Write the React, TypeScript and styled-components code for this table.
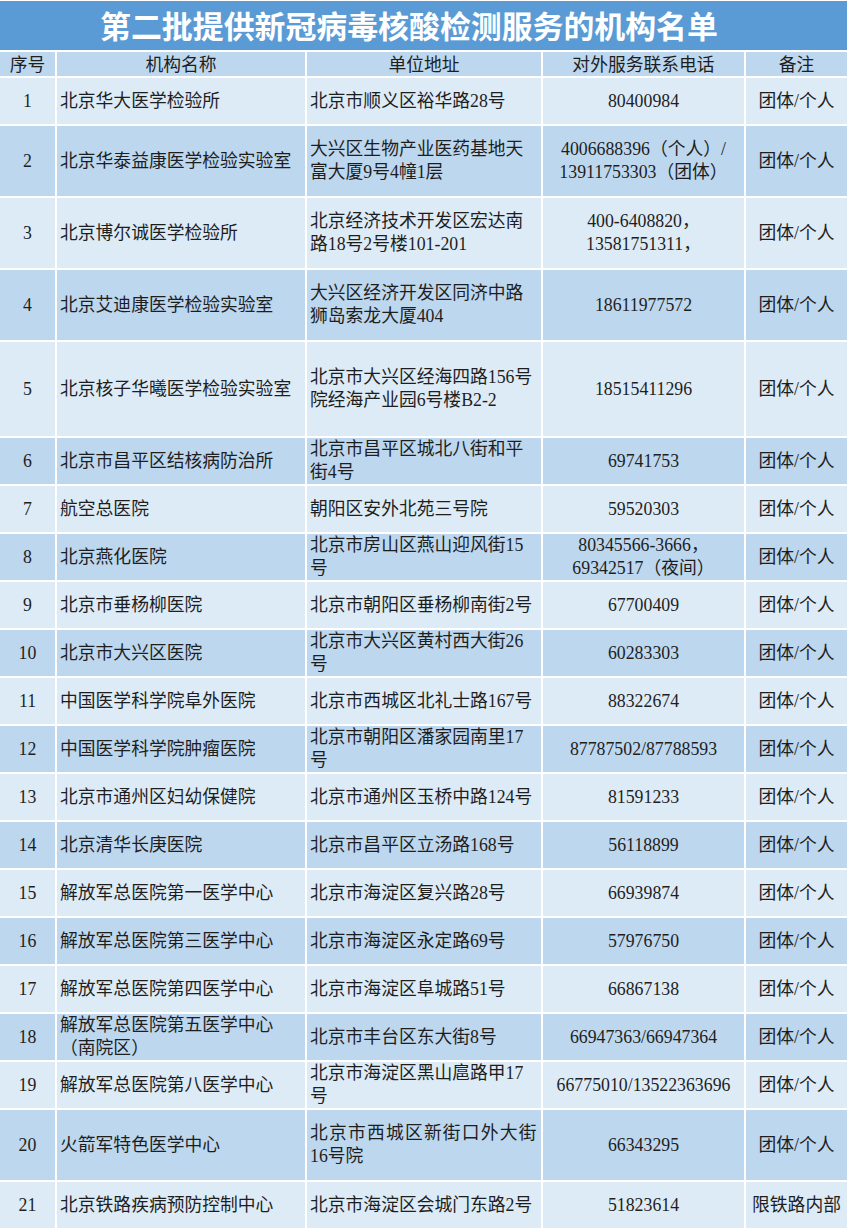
import React from "react";
import styled, { createGlobalStyle } from "styled-components";

const GlobalStyle = createGlobalStyle`
  html, body { margin: 0; padding: 0; background: #ffffff; }
  body {
    font-family: "Liberation Serif", "Noto Sans CJK SC", serif;
    color: #1e1e1e;
  }
`;

const COLS = "55px 248px 234px 201px 101px";

const Page = styled.div`
  width: 848px;
  padding-top: 1px;
  display: flex;
  flex-direction: column;
  gap: 2px;
  background: #ffffff;
`;

const TitleBar = styled.div`
  width: 847px;
  height: 49px;
  background: #5b9bd5;
  display: flex;
  align-items: center;
  justify-content: center;
  box-sizing: border-box;
  padding-right: 29px;
`;

const Title = styled.h1`
  margin: 0;
  font-family: "Noto Sans CJK SC", sans-serif;
  font-weight: 700;
  font-size: 30.9px;
  line-height: 1;
  color: #ffffff;
`;

const Row = styled.div<{ $h: number }>`
  display: grid;
  grid-template-columns: ${COLS};
  column-gap: 2px;
  height: ${(p) => p.$h}px;
`;

const Cell = styled.div<{ $dark: boolean; $align: "left" | "center" }>`
  background: ${(p) => (p.$dark ? "#bdd7ee" : "#ddebf7")};
  display: flex;
  flex-direction: column;
  justify-content: center;
  align-items: ${(p) => (p.$align === "left" ? "flex-start" : "center")};
  padding: 0 ${(p) => (p.$align === "left" ? "0 0 3px" : "0")};
  box-sizing: border-box;
  font-size: 17.8px;
  line-height: 23px;
  white-space: nowrap;
  overflow: hidden;
`;

const HeaderCell = styled(Cell)`
  line-height: 24px;
  padding-top: 1px;
`;

const Line = styled.span<{ $spread?: number }>`
  display: block;
  letter-spacing: ${(p) => p.$spread ?? 0}px;
`;

type Entry = {
  name: string[];
  addr: string[];
  phone: string[];
  note?: string;
  h?: number;
  spread?: number;
};

const data: Entry[] = [
  { name: ["北京华大医学检验所"], addr: ["北京市顺义区裕华路28号"], phone: ["80400984"] },
  {
    name: ["北京华泰益康医学检验实验室"],
    addr: ["大兴区生物产业医药基地天", "富大厦9号4幢1层"],
    phone: ["4006688396（个人）/", "13911753303（团体）"],
    h: 70,
  },
  {
    name: ["北京博尔诚医学检验所"],
    addr: ["北京经济技术开发区宏达南", "路18号2号楼101-201"],
    phone: ["400-6408820，", "13581751311，"],
    h: 70,
  },
  {
    name: ["北京艾迪康医学检验实验室"],
    addr: ["大兴区经济开发区同济中路", "狮岛索龙大厦404"],
    phone: ["18611977572"],
    h: 70,
  },
  {
    name: ["北京核子华曦医学检验实验室"],
    addr: ["北京市大兴区经海四路156号", "院经海产业园6号楼B2-2"],
    phone: ["18515411296"],
    h: 94,
  },
  { name: ["北京市昌平区结核病防治所"], addr: ["北京市昌平区城北八街和平", "街4号"], phone: ["69741753"] },
  { name: ["航空总医院"], addr: ["朝阳区安外北苑三号院"], phone: ["59520303"] },
  {
    name: ["北京燕化医院"],
    addr: ["北京市房山区燕山迎风街15", "号"],
    phone: ["80345566-3666，", "69342517（夜间）"],
  },
  { name: ["北京市垂杨柳医院"], addr: ["北京市朝阳区垂杨柳南街2号"], phone: ["67700409"] },
  { name: ["北京市大兴区医院"], addr: ["北京市大兴区黄村西大街26", "号"], phone: ["60283303"] },
  { name: ["中国医学科学院阜外医院"], addr: ["北京市西城区北礼士路167号"], phone: ["88322674"] },
  { name: ["中国医学科学院肿瘤医院"], addr: ["北京市朝阳区潘家园南里17", "号"], phone: ["87787502/87788593"] },
  { name: ["北京市通州区妇幼保健院"], addr: ["北京市通州区玉桥中路124号"], phone: ["81591233"] },
  { name: ["北京清华长庚医院"], addr: ["北京市昌平区立汤路168号"], phone: ["56118899"] },
  { name: ["解放军总医院第一医学中心"], addr: ["北京市海淀区复兴路28号"], phone: ["66939874"] },
  { name: ["解放军总医院第三医学中心"], addr: ["北京市海淀区永定路69号"], phone: ["57976750"] },
  { name: ["解放军总医院第四医学中心"], addr: ["北京市海淀区阜城路51号"], phone: ["66867138"] },
  {
    name: ["解放军总医院第五医学中心", "（南院区）"],
    addr: ["北京市丰台区东大街8号"],
    phone: ["66947363/66947364"],
  },
  {
    name: ["解放军总医院第八医学中心"],
    addr: ["北京市海淀区黑山扈路甲17", "号"],
    phone: ["66775010/13522363696"],
  },
  {
    name: ["火箭军特色医学中心"],
    addr: ["北京市西城区新街口外大街", "16号院"],
    phone: ["66343295"],
    h: 70,
    spread: 1.2,
  },
  {
    name: ["北京铁路疾病预防控制中心"],
    addr: ["北京市海淀区会城门东路2号"],
    phone: ["51823614"],
    note: "限铁路内部",
  },
];

const headers: { text: string; align: "left" | "center" }[] = [
  { text: "序号", align: "center" },
  { text: "机构名称", align: "center" },
  { text: "单位地址", align: "center" },
  { text: "对外服务联系电话", align: "center" },
  { text: "备注", align: "center" },
];

export default function App() {
  return (
    <>
      <GlobalStyle />
      <Page>
        <TitleBar>
          <Title>第二批提供新冠病毒核酸检测服务的机构名单</Title>
        </TitleBar>
        <Row $h={24}>
          {headers.map((h) => (
            <HeaderCell key={h.text} $dark $align={h.align}>
              {h.text}
            </HeaderCell>
          ))}
        </Row>
        {data.map((e, i) => {
          const dark = i % 2 === 1;
          return (
            <Row key={i} $h={e.h ?? 46}>
              <Cell $dark={dark} $align="center">
                {i + 1}
              </Cell>
              <Cell $dark={dark} $align="left">
                {e.name.map((l) => (
                  <Line key={l}>{l}</Line>
                ))}
              </Cell>
              <Cell $dark={dark} $align="left">
                {e.addr.map((l, j) => (
                  <Line key={l} $spread={j === 0 ? e.spread : 0}>
                    {l}
                  </Line>
                ))}
              </Cell>
              <Cell $dark={dark} $align="center">
                {e.phone.map((l) => (
                  <Line key={l}>{l}</Line>
                ))}
              </Cell>
              <Cell $dark={dark} $align="center">
                {e.note ?? "团体/个人"}
              </Cell>
            </Row>
          );
        })}
      </Page>
    </>
  );
}
